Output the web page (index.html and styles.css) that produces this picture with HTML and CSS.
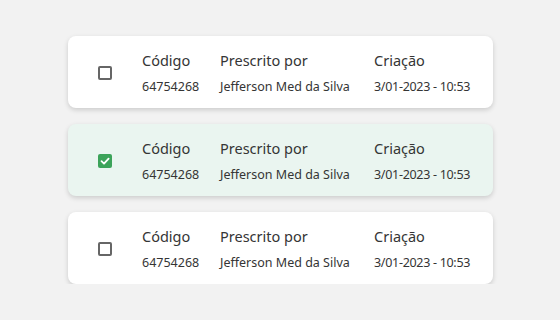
FILE: index.html
```html
<!DOCTYPE html>
<html>
<head>
<meta charset="utf-8">
<link rel="stylesheet" href="styles.css">
</head>
<body>
<div class="list">
  <div class="card">
    <div class="check"><span class="box"></span></div>
    <div class="col c1"><div class="label">Código</div><div class="value">64754268</div></div>
    <div class="col c2"><div class="label">Prescrito por</div><div class="value">Jefferson Med da Silva</div></div>
    <div class="col c3"><div class="label">Criação</div><div class="value">3/01-2023 - 10:53</div></div>
  </div>
  <div class="card selected">
    <div class="check"><span class="box checked"><svg viewBox="0 0 14 14" width="14" height="14"><path d="M3.5 7.2 L6 9.6 L10.6 4.6" fill="none" stroke="#fff" stroke-width="1.8" stroke-linecap="round" stroke-linejoin="round"/></svg></span></div>
    <div class="col c1"><div class="label">Código</div><div class="value">64754268</div></div>
    <div class="col c2"><div class="label">Prescrito por</div><div class="value">Jefferson Med da Silva</div></div>
    <div class="col c3"><div class="label">Criação</div><div class="value">3/01-2023 - 10:53</div></div>
  </div>
  <div class="card">
    <div class="check"><span class="box"></span></div>
    <div class="col c1"><div class="label">Código</div><div class="value">64754268</div></div>
    <div class="col c2"><div class="label">Prescrito por</div><div class="value">Jefferson Med da Silva</div></div>
    <div class="col c3"><div class="label">Criação</div><div class="value">3/01-2023 - 10:53</div></div>
  </div>
</div>
</body>
</html>
```
FILE: styles.css
```css
html, body {
  margin: 0;
  padding: 0;
  background: #f2f2f2;
  font-family: "Noto Sans", "Open Sans", sans-serif;
  color: #353535;
}
.list {
  display: flex;
  flex-direction: column;
  gap: 16px;
  width: 425px;
  padding-top: 36px;
  margin-left: 68px;
}
.card {
  height: 72px;
  box-sizing: border-box;
  background: #fff;
  border-radius: 8px;
  box-shadow: 0 2px 5px rgba(0,0,0,0.16);
  display: flex;
  align-items: center;
}
.card.selected {
  background: #eaf5f0;
}
.check {
  width: 74px;
  padding-left: 30px;
  padding-top: 2px;
  box-sizing: border-box;
  display: flex;
  align-items: center;
}
.box {
  width: 14px;
  height: 14px;
  box-sizing: border-box;
  border: 2px solid #666;
  border-radius: 2px;
  display: block;
}
.box.checked {
  border: none;
  background: #3ca35a;
}
.box svg { display: block; }
.col {
  display: flex;
  flex-direction: column;
  gap: 10px;
  margin-top: 1px;
}
.c1 { width: 78px; }
.c2 { width: 154px; }
.label {
  font-size: 14.5px;
  line-height: 18px;
}
.value {
  font-size: 12.5px;
  line-height: 16px;
}
.c3 .value { letter-spacing: -0.3px; }
```
